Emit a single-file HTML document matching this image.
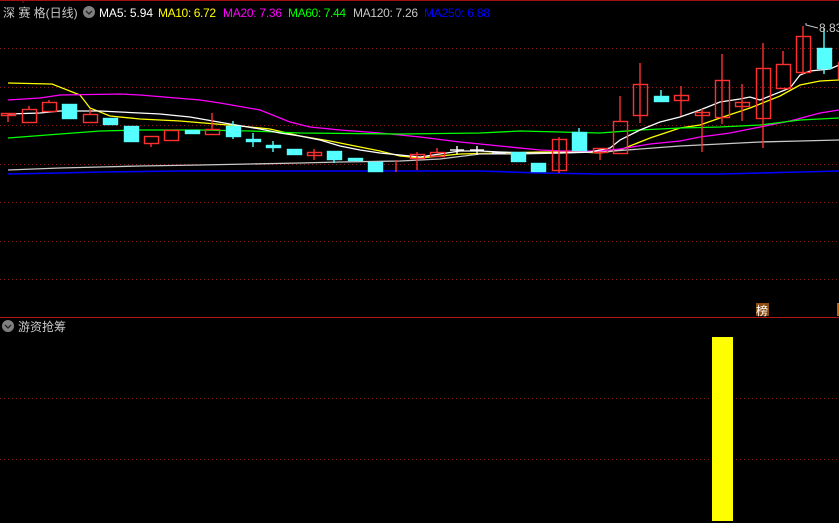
<!DOCTYPE html>
<html><head><meta charset="utf-8"><style>
html,body{margin:0;padding:0;background:#000;width:839px;height:523px;overflow:hidden}
svg{display:block}
text{font-family:"Liberation Sans","Noto Sans CJK SC",sans-serif;font-size:12px}
</style></head><body>
<svg width="839" height="523" viewBox="0 0 839 523" xmlns="http://www.w3.org/2000/svg">
<rect width="839" height="523" fill="#000"/>
<line x1="0" y1="0.5" x2="839" y2="0.5" stroke="#a01010"/>
<line x1="23" y1="0" x2="23" y2="3" stroke="#a01010"/>
<g stroke="#8a1a1a" stroke-dasharray="1 3">
<line x1="0" y1="48.5" x2="839" y2="48.5"/><line x1="0" y1="87.5" x2="839" y2="87.5"/>
<line x1="0" y1="125.5" x2="839" y2="125.5"/><line x1="0" y1="164.5" x2="839" y2="164.5"/>
<line x1="0" y1="202.5" x2="839" y2="202.5"/><line x1="0" y1="241.5" x2="839" y2="241.5"/>
<line x1="0" y1="279.5" x2="839" y2="279.5"/>
<line x1="0" y1="398.5" x2="839" y2="398.5"/><line x1="0" y1="459.5" x2="839" y2="459.5"/>
</g>
<line x1="0" y1="317.5" x2="839" y2="317.5" stroke="#b01818"/>
<g fill="none" stroke-width="1.3">
<polyline stroke="#ffff00" points="8,83 50,84 52,84 80,95 90,108 110,116 140,119 180,121 240,126 270,129 300,136 330,141 350,145 380,151 400,156 420,158 440,156 460,154 500,153 540,152 580,152 600,153 620,150 650,138 680,128 700,125 720,118 750,108 780,96 800,85 820,81 839,80"/>
<polyline stroke="#ff00ff" points="8,100 40,98 60,95 120,94 140,95 200,100 220,103 260,110 290,122 310,127 340,130 380,133 420,137 460,142 500,146 540,150 560,151 580,151 600,151 620,149 650,144 680,141 700,137 730,133 760,127 790,121 820,113 839,110"/>
<polyline stroke="#00ff00" points="8,138 60,134 100,131 140,130 200,130 250,131 300,133 400,134 480,133 520,131 560,132 600,133 640,130 680,128 720,127 760,125 800,120 839,118"/>
<polyline stroke="#c8c8c8" points="8,170 60,168 100,167 140,166 200,165 250,164 300,163 340,162 400,161 440,159 480,154 520,154 560,153 600,152 640,149 680,146 720,144 760,142 800,141 839,140"/>
<polyline stroke="#0000ff" stroke-width="1.6" points="8,174 60,173 100,172 180,171 240,171 300,171 400,171 480,171 540,173 600,174 660,174 720,174 760,173 800,172 839,171"/>
<polyline stroke="#ffffff" points="8,114 40,113 60,111 100,111 120,112 160,114 190,117 230,124 260,129 280,133 300,136 320,140 340,146 360,150 380,153 400,155 420,157 440,154 460,151 480,151 500,152 530,153 560,153 590,152 610,148 620,140 640,130 660,122 680,117 700,110 720,102 740,99 750,97 760,100 790,88 800,75 810,71 830,69 839,65"/>
</g>
<g stroke-width="1.4">
<g stroke="#ff3030" fill="none">
<line x1="8" y1="113" x2="8" y2="122"/><rect x="1.5" y="113.5" width="14" height="2"/>
<line x1="29" y1="106" x2="29" y2="109"/><rect x="22.5" y="109.5" width="14" height="13"/>
<line x1="49" y1="100" x2="49" y2="102"/><rect x="42.5" y="102.5" width="14" height="9"/>
<line x1="90" y1="109" x2="90" y2="114"/><rect x="83.5" y="114.5" width="14" height="8"/>
<line x1="151" y1="143" x2="151" y2="147"/><rect x="144.5" y="136.5" width="14" height="7"/>
<rect x="164.5" y="130.5" width="14" height="10"/>
<line x1="212" y1="113" x2="212" y2="129"/><rect x="205.5" y="129.5" width="14" height="5"/>
<line x1="314" y1="149" x2="314" y2="160"/><rect x="307.5" y="152.5" width="14" height="3"/>
<line x1="396" y1="160" x2="396" y2="172"/>
<line x1="417" y1="152" x2="417" y2="170"/><rect x="410.5" y="154.5" width="14" height="4"/>
<line x1="437" y1="148" x2="437" y2="152"/><rect x="430.5" y="152.5" width="14" height="4"/>
<line x1="559" y1="137" x2="559" y2="173"/><rect x="552.5" y="139.5" width="14" height="31"/>
<line x1="600" y1="152" x2="600" y2="160"/><rect x="593.5" y="148.5" width="14" height="4"/>
<line x1="620" y1="96" x2="620" y2="121"/><rect x="613.5" y="121.5" width="14" height="32"/>
<line x1="640" y1="63" x2="640" y2="123"/><rect x="633.5" y="84.5" width="14" height="31"/>
<line x1="681" y1="86" x2="681" y2="116"/><rect x="674.5" y="95.5" width="14" height="5"/>
<line x1="702" y1="109" x2="702" y2="152"/><rect x="695.5" y="112.5" width="14" height="3"/>
<line x1="722" y1="54" x2="722" y2="124"/><rect x="715.5" y="80.5" width="14" height="37"/>
<line x1="742" y1="84" x2="742" y2="121"/><rect x="735.5" y="102.5" width="14" height="4"/>
<line x1="763" y1="43" x2="763" y2="148"/><rect x="756.5" y="68.5" width="14" height="50"/>
<line x1="783" y1="51" x2="783" y2="64"/><rect x="776.5" y="64.5" width="14" height="24"/>
<line x1="803" y1="26" x2="803" y2="74"/><rect x="796.5" y="36.5" width="14" height="36"/>
<rect x="838.5" y="62.5" width="14" height="16"/>
</g>
<g fill="#55ffff" stroke="#55ffff">
<rect x="62.5" y="104.5" width="14" height="14"/>
<rect x="103.5" y="118.5" width="14" height="6"/>
<rect x="124.5" y="126.5" width="14" height="15"/>
<rect x="185.5" y="130.5" width="14" height="3"/>
<line x1="233" y1="121" x2="233" y2="139"/><rect x="226.5" y="126.5" width="14" height="10"/>
<line x1="253" y1="133" x2="253" y2="147"/><rect x="246.5" y="139.5" width="14" height="2"/>
<line x1="273" y1="141" x2="273" y2="152"/><rect x="266.5" y="145.5" width="14" height="2"/>
<rect x="287.5" y="149.5" width="14" height="5"/>
<line x1="334" y1="156" x2="334" y2="163"/><rect x="327.5" y="151.5" width="14" height="8"/>
<rect x="348.5" y="158.5" width="14" height="2"/>
<rect x="368.5" y="162.5" width="14" height="9"/>
<rect x="511.5" y="152.5" width="14" height="9"/>
<rect x="531.5" y="163.5" width="14" height="8"/>
<line x1="579" y1="128" x2="579" y2="132"/><rect x="572.5" y="132.5" width="14" height="18"/>
<line x1="661" y1="90" x2="661" y2="101"/><rect x="654.5" y="96.5" width="14" height="5"/>
<line x1="824" y1="28" x2="824" y2="74"/><rect x="817.5" y="48.5" width="14" height="20"/>
</g>
<g stroke="#ffffff">
<line x1="450" y1="150" x2="464" y2="150"/><line x1="457" y1="146" x2="457" y2="154"/>
<line x1="470" y1="150" x2="484" y2="150"/><line x1="477" y1="146" x2="477" y2="155"/>
<line x1="492" y1="153" x2="506" y2="153"/>
</g>
</g>
<polyline points="806,23 806,25 818,28" fill="none" stroke="#c8c8c8"/>
<text x="819" y="32" fill="#c8c8c8">8.83</text>
<text x="3" y="17" fill="#c8c8c8" font-size="13">深 赛 格(日线)</text>
<circle cx="89" cy="12" r="6" fill="#808080"/><polyline points="86,11 89,14 92,11" fill="none" stroke="#222" stroke-width="1.3"/>
<text x="99" y="17" fill="#ffffff" textLength="54">MA5: 5.94</text>
<text x="158" y="17" fill="#ffff00" textLength="58">MA10: 6.72</text>
<text x="223" y="17" fill="#ff00ff" textLength="59">MA20: 7.36</text>
<text x="288" y="17" fill="#00ff00" textLength="58">MA60: 7.44</text>
<text x="353" y="17" fill="#c8c8c8" textLength="65">MA120: 7.26</text>
<text x="424" y="17" fill="#0000ff" textLength="66">MA250: 6.88</text>
<rect x="756" y="303" width="13" height="13" fill="#8a4a10"/>
<text x="756" y="315" fill="#ffffff" font-size="12">榜</text>
<rect x="837" y="303" width="3" height="13" fill="#c86010"/>
<circle cx="8" cy="326" r="6" fill="#808080"/><polyline points="5,325 8,328 11,325" fill="none" stroke="#222" stroke-width="1.3"/>
<text x="18" y="331" fill="#c8c8c8" font-size="13">游资抢筹</text>
<rect x="712" y="337" width="21" height="184" fill="#ffff00"/>
</svg>
</body></html>
